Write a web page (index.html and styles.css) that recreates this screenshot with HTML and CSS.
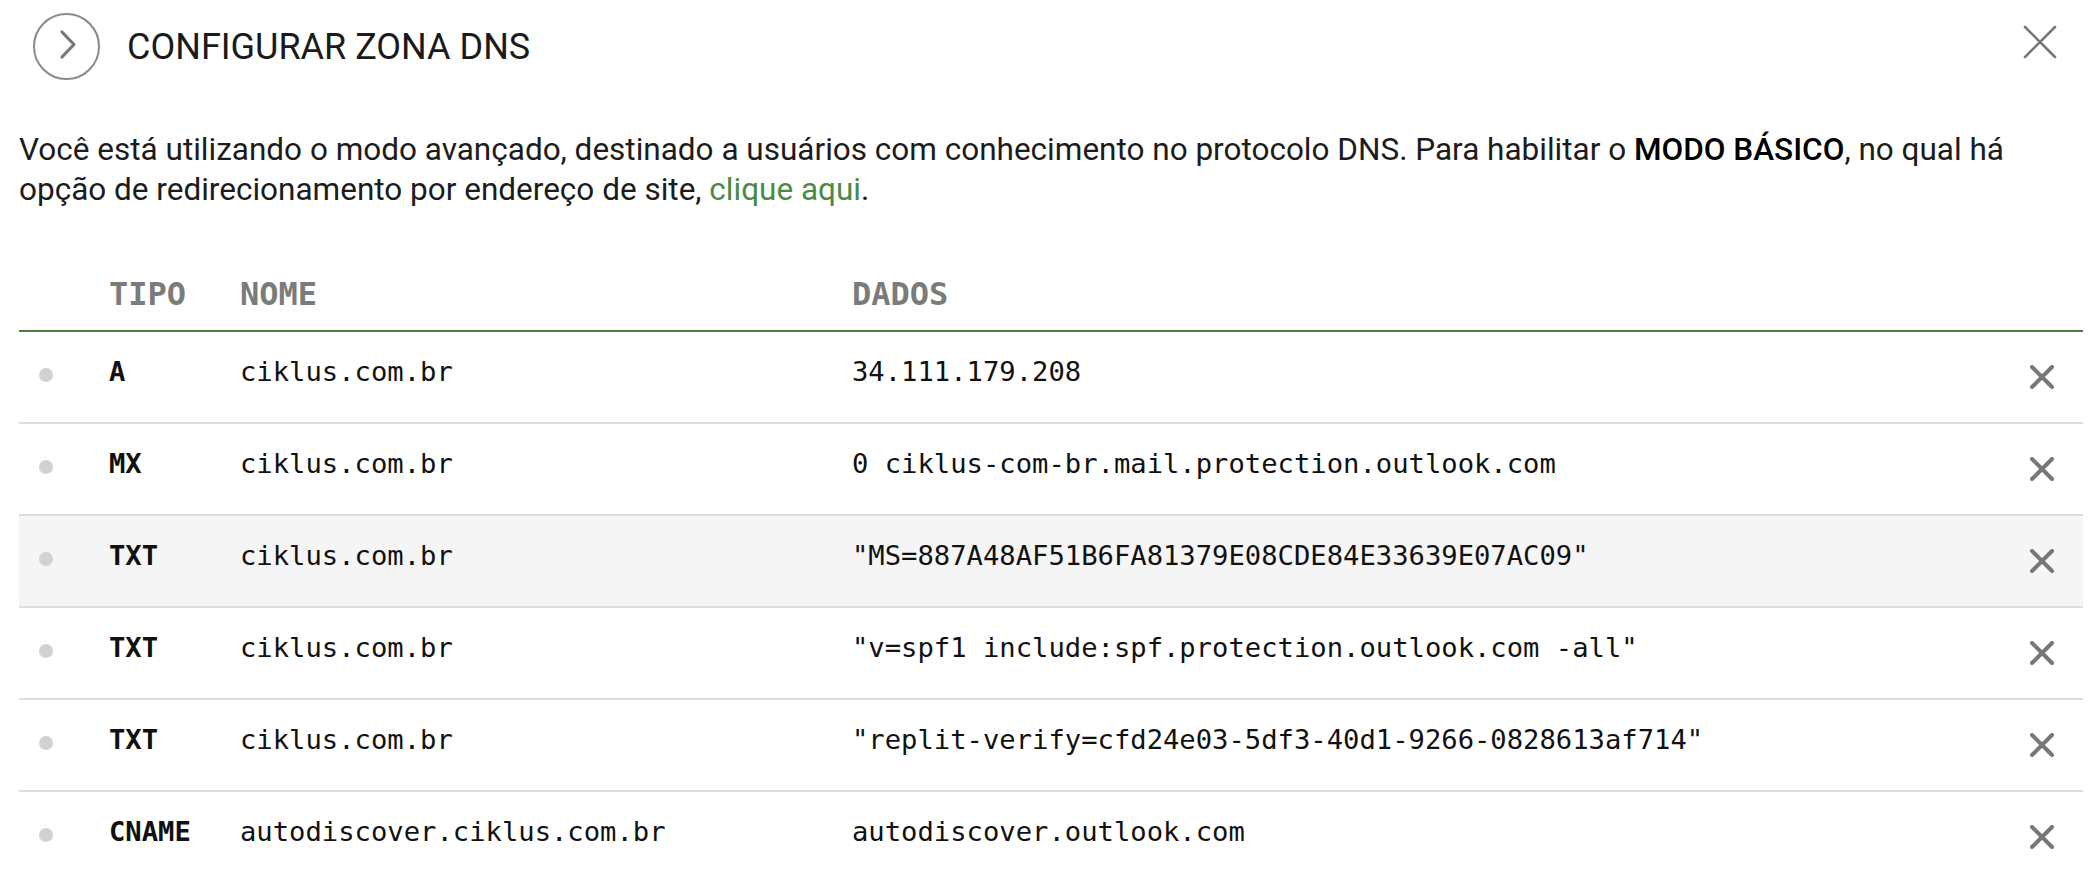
FILE: index.html
```html
<!DOCTYPE html>
<html lang="pt-BR">
<head>
<meta charset="utf-8">
<title>Configurar zona DNS</title>
<link rel="stylesheet" href="styles.css">
</head>
<body>
<div class="panel">
  <header class="topbar">
    <button class="back" aria-label="Voltar">
      <svg width="67" height="67" viewBox="0 0 67 67"><circle cx="33.5" cy="33.5" r="32.5" fill="none" stroke="#8a8a8a" stroke-width="2"/><polyline points="29,19 41,31.5 29,44" fill="none" stroke="#777" stroke-width="3.2" stroke-linecap="round" stroke-linejoin="round"/></svg>
    </button>
    <h1 class="title">CONFIGURAR ZONA DNS</h1>
    <button class="close" aria-label="Fechar">
      <svg width="34" height="34" viewBox="0 0 34 34"><path d="M2 2 L32 32 M32 2 L2 32" stroke="#777" stroke-width="2.6" stroke-linecap="round"/></svg>
    </button>
  </header>

  <p class="intro">Você está utilizando o modo avançado, destinado a usuários com conhecimento no protocolo DNS. Para habilitar o <strong>MODO BÁSICO</strong>, no qual há opção de redirecionamento por endereço de site, <a href="#" class="link">clique aqui</a>.</p>

  <div class="records">
    <div class="row head">
      <span></span>
      <span class="th">TIPO</span>
      <span class="th">NOME</span>
      <span class="th">DADOS</span>
      <span></span>
    </div>
    <div class="row">
      <span class="dot"></span><span class="type">A</span><span class="cell">ciklus.com.br</span><span class="cell">34.111.179.208</span>
      <span class="del"><svg width="24" height="24" viewBox="0 0 24 24"><path d="M2 2 L22 22 M22 2 L2 22" stroke="#777" stroke-width="4" stroke-linecap="round"/></svg></span>
    </div>
    <div class="row">
      <span class="dot"></span><span class="type">MX</span><span class="cell">ciklus.com.br</span><span class="cell">0 ciklus-com-br.mail.protection.outlook.com</span>
      <span class="del"><svg width="24" height="24" viewBox="0 0 24 24"><path d="M2 2 L22 22 M22 2 L2 22" stroke="#777" stroke-width="4" stroke-linecap="round"/></svg></span>
    </div>
    <div class="row hover">
      <span class="dot"></span><span class="type">TXT</span><span class="cell">ciklus.com.br</span><span class="cell">"MS=887A48AF51B6FA81379E08CDE84E33639E07AC09"</span>
      <span class="del"><svg width="24" height="24" viewBox="0 0 24 24"><path d="M2 2 L22 22 M22 2 L2 22" stroke="#777" stroke-width="4" stroke-linecap="round"/></svg></span>
    </div>
    <div class="row">
      <span class="dot"></span><span class="type">TXT</span><span class="cell">ciklus.com.br</span><span class="cell">"v=spf1 include:spf.protection.outlook.com -all"</span>
      <span class="del"><svg width="24" height="24" viewBox="0 0 24 24"><path d="M2 2 L22 22 M22 2 L2 22" stroke="#777" stroke-width="4" stroke-linecap="round"/></svg></span>
    </div>
    <div class="row">
      <span class="dot"></span><span class="type">TXT</span><span class="cell">ciklus.com.br</span><span class="cell">"replit-verify=cfd24e03-5df3-40d1-9266-0828613af714"</span>
      <span class="del"><svg width="24" height="24" viewBox="0 0 24 24"><path d="M2 2 L22 22 M22 2 L2 22" stroke="#777" stroke-width="4" stroke-linecap="round"/></svg></span>
    </div>
    <div class="row">
      <span class="dot"></span><span class="type">CNAME</span><span class="cell">autodiscover.ciklus.com.br</span><span class="cell">autodiscover.outlook.com</span>
      <span class="del"><svg width="24" height="24" viewBox="0 0 24 24"><path d="M2 2 L22 22 M22 2 L2 22" stroke="#777" stroke-width="4" stroke-linecap="round"/></svg></span>
    </div>
  </div>
</div>
</body>
</html>
```

FILE: styles.css
```css
* { box-sizing: border-box; }
html, body { margin: 0; padding: 0; background: #fff; }
body {
  font-family: Roboto, "Liberation Sans", sans-serif;
  color: #1c1c1c;
  overflow: hidden;
}
.panel {
  padding: 0 11px 0 19px;
}
.topbar {
  display: flex;
  align-items: center;
  height: 80px;
  padding-top: 13px;
  margin-left: 14px;
}
.back {
  width: 67px;
  height: 67px;
  padding: 0;
  border: 0;
  background: none;
  display: block;
  flex: none;
}
.back svg { display: block; }
.title {
  margin: 0 0 0 27px;
  font-size: 36px;
  font-weight: 400;
  line-height: 40px;
  color: #1a1a1a;
  letter-spacing: 0;
  flex: 1;
}
.close {
  width: 34px;
  height: 34px;
  padding: 0;
  border: 0;
  background: none;
  margin: 0 26px 10px 0;
  flex: none;
}
.close svg { display: block; }
.intro {
  margin: 50px 0 0 0;
  font-size: 31.5px;
  line-height: 40px;
  color: #1c1c1c;
}
.intro strong { font-weight: 500; color: #000; }
.link { color: #4b8a45; text-decoration: none; }
.records {
  margin-top: 42px;
}
.row {
  display: grid;
  grid-template-columns: 90px 131px 612px 1fr 82px;
  align-items: center;
  height: 92px;
  border-bottom: 2px solid #dedede;
  font-family: "DejaVu Sans Mono", "Liberation Mono", monospace;
  font-size: 27.2px;
  color: #111;
}
.row.head {
  height: 80px;
  align-items: end;
  border-bottom: 2px solid #4b7f42;
}
.row.hover { background: #f5f5f5; }
.th {
  font-size: 32px;
  font-weight: 700;
  color: #7b7b7b;
  line-height: 40px;
  padding-bottom: 16px;
}
.type, .cell {
  line-height: 40px;
  margin-bottom: 10px;
  white-space: nowrap;
}
.type { font-weight: 700; }
.dot {
  width: 14px;
  height: 14px;
  border-radius: 50%;
  background: #d2d2d2;
  margin: 0 0 4px 20px;
}
.del {
  display: flex;
  justify-content: center;
  align-items: center;
}
.del svg { display: block; }
```
